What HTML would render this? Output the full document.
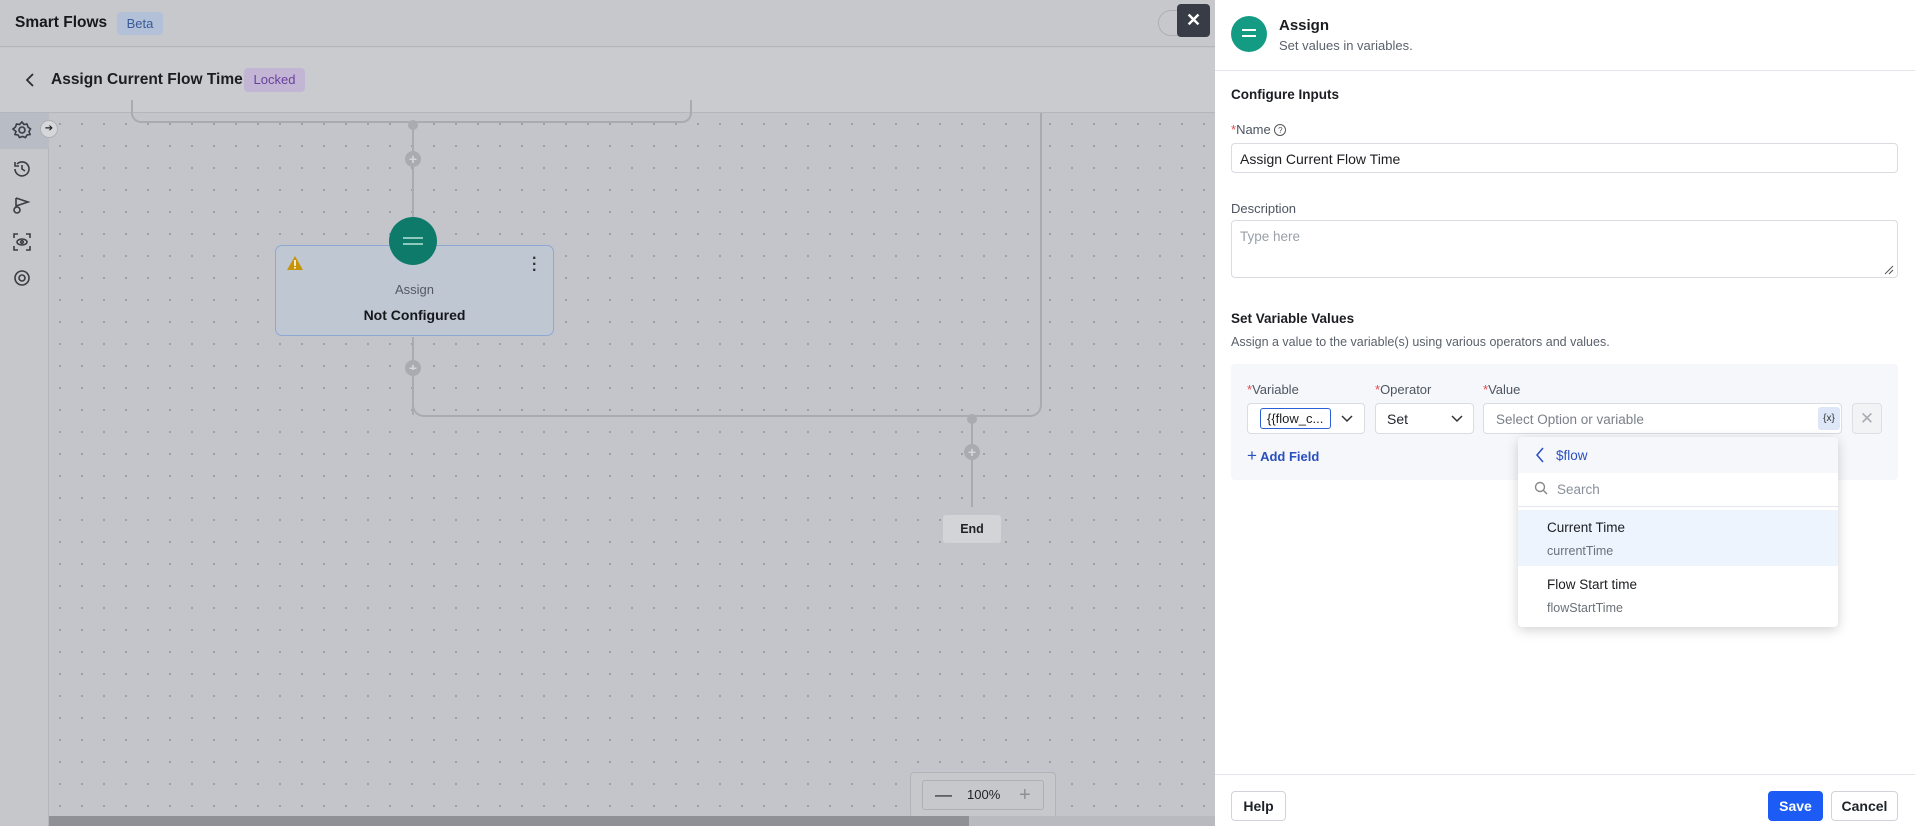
<!DOCTYPE html>
<html><head><meta charset="utf-8"><style>
*{box-sizing:border-box;margin:0;padding:0}
body{width:1915px;height:826px;overflow:hidden;position:relative;font-family:"Liberation Sans",sans-serif;background:#c4c6cb;color:#1f2329}
.a{position:absolute}
.canvas{left:49px;top:113px;width:1166px;height:713px;background-color:#c3c5ca;background-image:radial-gradient(#9a9ca2 1px,transparent 1.2px);background-size:22px 22px}
.plus{width:16px;height:16px;border-radius:50%;background:#a9abb1;color:#d4d6da;font-size:14px;line-height:16px;text-align:center;font-weight:bold}
.inp{border:1px solid #d9dce1;border-radius:4px;background:#fff}
.lbl{font-size:13px;color:#4e5561}
.req{color:#e5484d}
.btn{border:1px solid #d0d4da;border-radius:4px;background:#fff;font-size:14px;text-align:center;line-height:28px}
</style></head><body>
<!-- top bar -->
<div class="a" style="left:0;top:0;width:1215px;height:47px;background:#c7c8cc;border-bottom:1px solid #b4b6bb"></div>
<div class="a" style="left:15px;top:14px;font-size:15.5px;font-weight:bold;color:#16181c">Smart Flows</div>
<div class="a" style="left:117px;top:12px;width:46px;height:23px;background:#b2c0d8;border-radius:4px;color:#3a5a9a;font-size:13px;line-height:23px;text-align:center">Beta</div>
<div class="a" style="left:1158px;top:10px;width:40px;height:26px;border:1px solid #aeb0b5;border-radius:13px"></div>
<div class="a" style="left:1177px;top:4px;width:33px;height:33px;background:#373c47;border-radius:4px;color:#fff;font-size:18px;line-height:33px;text-align:center;font-weight:bold">✕</div>
<!-- second bar -->
<div class="a" style="left:0;top:48px;width:1215px;height:65px;background:#cacbce;border-bottom:1px solid #b4b6bb"></div>
<svg class="a" style="left:24px;top:72px" width="12" height="16"><path d="M9 2L3 8l6 6" stroke="#2a2d33" stroke-width="1.8" fill="none"/></svg>
<div class="a" style="left:51px;top:71px;font-size:15.5px;font-weight:bold;color:#1b1d21">Assign Current Flow Time</div>
<div class="a" style="left:244px;top:68px;width:61px;height:24px;background:#c3b6d4;border-radius:4px;color:#6a3fa0;font-size:13px;line-height:24px;text-align:center">Locked</div>
<!-- sidebar -->
<div class="a" style="left:0;top:113px;width:49px;height:713px;background:#c6c7cb;border-right:1px solid #b4b6bb"></div>
<div class="a" style="left:0;top:113px;width:49px;height:36px;background:#b8bcc4"></div>
<svg class="a" style="left:12px;top:120px" width="20" height="20" fill="none" stroke="#3a3d44" stroke-width="1.6"><circle cx="10" cy="10" r="3"/><path d="M10 2l2 2.5 3-.5 1 3 2.5 2-1.5 2.5 1 3-3 .5-1.5 2.5-3-1-3 1-1.5-2.5-3-.5 1-3L1 9l2.5-2 1-3 3 .5z"/></svg>
<svg class="a" style="left:12px;top:159px" width="20" height="20" fill="none" stroke="#3a3d44" stroke-width="1.6"><path d="M3 10a7 7 0 1 0 2-5M3 3v4h4M10 6v4l3 2"/></svg>
<svg class="a" style="left:12px;top:195px" width="20" height="20" fill="none" stroke="#3a3d44" stroke-width="1.6"><path d="M4 3v8l12-4L4 3"/><circle cx="5" cy="15" r="3"/></svg>
<svg class="a" style="left:12px;top:232px" width="20" height="20" fill="none" stroke="#3a3d44" stroke-width="1.6"><path d="M2 6V2h4M14 2h4v4M18 14v4h-4M6 18H2v-4"/><ellipse cx="10" cy="10" rx="5" ry="3"/><circle cx="10" cy="10" r="1.3"/></svg>
<svg class="a" style="left:12px;top:268px" width="20" height="20" fill="none" stroke="#3a3d44" stroke-width="1.6"><circle cx="10" cy="10" r="7"/><circle cx="10" cy="10" r="3"/></svg>
<!-- canvas -->
<div class="a canvas"></div>
<div class="a" style="left:40px;top:120px;width:18px;height:18px;border-radius:50%;background:#d6d7da;border:1px solid #aeb0b5;font-size:10px;text-align:center;line-height:16px;color:#222">➔</div>
<div class="a" style="left:131px;top:100px;width:561px;height:23px;border:2px solid #a9abb1;border-top:none;border-radius:0 0 10px 10px"></div>
<div class="a" style="left:412px;top:123px;width:2px;height:122px;background:#a9abb1"></div>
<div class="a" style="left:408px;top:120px;width:10px;height:10px;border-radius:50%;background:#a9abb1"></div>
<div class="a plus" style="left:405px;top:151px">+</div>
<div class="a" style="left:275px;top:245px;width:279px;height:91px;background:#bfc7d3;border:1.5px solid #8ea8d4;border-radius:7px"></div>
<div class="a" style="left:389px;top:217px;width:48px;height:48px;border-radius:50%;background:#0e7a6a"></div>
<div class="a" style="left:403px;top:237px;width:20px;height:2px;background:#8ec9bd"></div>
<div class="a" style="left:403px;top:243px;width:20px;height:2px;background:#8ec9bd"></div>
<svg class="a" style="left:286px;top:255px" width="18" height="16"><path d="M9 1L17 15H1z" fill="#c79408"/><rect x="8.2" y="5" width="1.6" height="6" fill="#fff"/><rect x="8.2" y="12" width="1.6" height="1.6" fill="#fff"/></svg>
<div class="a" style="left:532px;top:256px;font-size:16px;font-weight:bold;color:#333;line-height:6px">·<br>·<br>·</div>
<div class="a" style="left:275px;top:282px;width:279px;text-align:center;font-size:13px;color:#555a62">Assign</div>
<div class="a" style="left:275px;top:307px;width:279px;text-align:center;font-size:14px;font-weight:bold;color:#15171a">Not Configured</div>
<div class="a" style="left:412px;top:337px;width:2px;height:78px;border-left:2px solid #a9abb1"></div>
<div class="a plus" style="left:405px;top:360px">+</div>
<div class="a" style="left:412px;top:370px;width:630px;height:47px;border:2px solid #a9abb1;border-top:none;border-radius:0 0 12px 12px"></div>
<div class="a" style="left:1040px;top:113px;width:2px;height:262px;background:#a9abb1"></div>
<div class="a" style="left:971px;top:417px;width:2px;height:90px;background:#a9abb1"></div>
<div class="a" style="left:967px;top:414px;width:10px;height:10px;border-radius:50%;background:#a9abb1"></div>
<div class="a plus" style="left:964px;top:444px">+</div>
<div class="a" style="left:943px;top:515px;width:58px;height:28px;background:#d3d4d7;border-radius:3px;font-size:12.5px;font-weight:bold;text-align:center;line-height:28px;color:#1f2125">End</div>
<div class="a" style="left:910px;top:772px;width:146px;height:46px;background:#c7c8cc;border:1px solid #b1b3b8;border-radius:4px"></div>
<div class="a" style="left:922px;top:780px;width:122px;height:30px;border:1px solid #aeb0b5;border-radius:3px;font-size:13px;line-height:28px;color:#1f2125"><span style="position:absolute;left:12px;font-size:17px">—</span><span style="position:absolute;left:44px">100%</span><span style="position:absolute;left:96px;font-size:20px;color:#8c8f95">+</span></div>
<div class="a" style="left:49px;top:816px;width:1166px;height:10px;background:#b8babf"></div>
<div class="a" style="left:49px;top:816px;width:920px;height:10px;background:#8f9196"></div>
<!-- panel -->
<div class="a" style="left:1215px;top:0;width:700px;height:826px;background:#fff"></div>
<div class="a" style="left:1231px;top:16px;width:36px;height:36px;border-radius:50%;background:#139b83"></div>
<div class="a" style="left:1242px;top:29px;width:14px;height:2px;background:#fff"></div>
<div class="a" style="left:1242px;top:35px;width:14px;height:2px;background:#fff"></div>
<div class="a" style="left:1279px;top:17px;font-size:15px;font-weight:bold;color:#1b1d21">Assign</div>
<div class="a" style="left:1279px;top:38px;font-size:13px;color:#5b616b">Set values in variables.</div>
<div class="a" style="left:1215px;top:70px;width:700px;height:1px;background:#e3e6ea"></div>
<div class="a" style="left:1231px;top:87px;font-size:13.5px;font-weight:bold;color:#1b1d21">Configure Inputs</div>
<div class="a lbl" style="left:1231px;top:122px"><span class="req">*</span>Name <span style="display:inline-block;width:12px;height:12px;border:1px solid #555;border-radius:50%;font-size:8px;text-align:center;line-height:11px;vertical-align:1px">?</span></div>
<div class="a inp" style="left:1231px;top:143px;width:667px;height:30px;padding:7px 8px;font-size:14px;color:#1b1d21">Assign Current Flow Time</div>
<div class="a lbl" style="left:1231px;top:201px">Description</div>
<div class="a inp" style="left:1231px;top:220px;width:667px;height:58px;padding:8px;font-size:13.5px;color:#9aa0a8">Type here</div>
<svg class="a" style="left:1884px;top:265px" width="10" height="10" stroke="#555"><path d="M1 9L9 1M5 9L9 5"/></svg>
<div class="a" style="left:1231px;top:311px;font-size:13.5px;font-weight:bold;color:#1b1d21">Set Variable Values</div>
<div class="a" style="left:1231px;top:335px;font-size:12.5px;color:#5b616b">Assign a value to the variable(s) using various operators and values.</div>
<div class="a" style="left:1231px;top:364px;width:667px;height:116px;background:#f5f7fa;border-radius:4px"></div>
<div class="a lbl" style="left:1247px;top:382px"><span class="req">*</span>Variable</div>
<div class="a lbl" style="left:1375px;top:382px"><span class="req">*</span>Operator</div>
<div class="a lbl" style="left:1483px;top:382px"><span class="req">*</span>Value</div>
<div class="a inp" style="left:1247px;top:403px;width:118px;height:31px"></div>
<div class="a" style="left:1260px;top:408px;width:71px;height:21px;border:1.5px solid #2a5fd6;border-radius:3px;font-size:13px;line-height:19px;padding-left:6px;color:#1b1d21">{{flow_c...</div>
<svg class="a" style="left:1341px;top:412px" width="12" height="12"><path d="M1 4l5 5 5-5" stroke="#333" stroke-width="1.5" fill="none"/></svg>
<div class="a inp" style="left:1375px;top:403px;width:99px;height:31px;padding:7px 11px;font-size:14px">Set</div>
<svg class="a" style="left:1451px;top:412px" width="12" height="12"><path d="M1 4l5 5 5-5" stroke="#333" stroke-width="1.5" fill="none"/></svg>
<div class="a inp" style="left:1483px;top:403px;width:359px;height:31px;padding:8px 12px;font-size:13.5px;color:#7a8089">Select Option or variable</div>
<div class="a" style="left:1818px;top:407px;width:22px;height:23px;background:#dde7f8;border-radius:3px;font-size:10px;text-align:center;line-height:23px;color:#333">{x}</div>
<div class="a" style="left:1852px;top:403px;width:30px;height:31px;border:1px solid #dcdfe4;border-radius:4px;background:#f2f3f5;color:#a9adb3;font-size:17px;text-align:center;line-height:29px">✕</div>
<div class="a" style="left:1247px;top:446px;font-size:13px;font-weight:bold;color:#2a4fbf"><span style="font-size:17px;font-weight:normal">+</span> Add Field</div>
<!-- dropdown -->
<div class="a" style="left:1518px;top:437px;width:320px;height:190px;background:#fff;border-radius:4px;box-shadow:0 3px 12px rgba(0,0,0,.18);overflow:hidden">
 <div class="a" style="left:0;top:0;width:320px;height:36px;background:#f5f7fb"></div>
 <svg class="a" style="left:17px;top:10px" width="10" height="16"><path d="M8 1L2 8l6 7" stroke="#2a4fbf" stroke-width="1.5" fill="none"/></svg>
 <div class="a" style="left:38px;top:11px;font-size:13.5px;color:#2a4fbf">$flow</div>
 <svg class="a" style="left:16px;top:44px" width="14" height="14" stroke="#888" stroke-width="1.4" fill="none"><circle cx="6" cy="6" r="4.5"/><path d="M9.5 9.5L13 13"/></svg>
 <div class="a" style="left:39px;top:45px;font-size:13.5px;color:#8a9099">Search</div>
 <div class="a" style="left:0;top:69px;width:320px;height:1px;background:#e3e6ea"></div>
 <div class="a" style="left:0;top:73px;width:320px;height:56px;background:#eef4fe"></div>
 <div class="a" style="left:29px;top:83px;font-size:13.5px;color:#1b1d21">Current Time</div>
 <div class="a" style="left:29px;top:107px;font-size:12.5px;color:#6b717a">currentTime</div>
 <div class="a" style="left:29px;top:140px;font-size:13.5px;color:#1b1d21">Flow Start time</div>
 <div class="a" style="left:29px;top:164px;font-size:12.5px;color:#6b717a">flowStartTime</div>
</div>
<!-- footer -->
<div class="a" style="left:1215px;top:774px;width:700px;height:1px;background:#e3e6ea"></div>
<div class="a btn" style="left:1231px;top:791px;width:55px;height:30px;font-weight:bold">Help</div>
<div class="a btn" style="left:1768px;top:791px;width:55px;height:30px;background:#1c5cf5;border-color:#1c5cf5;color:#fff;font-weight:bold">Save</div>
<div class="a btn" style="left:1831px;top:791px;width:67px;height:30px;font-weight:bold">Cancel</div>
</body></html>
